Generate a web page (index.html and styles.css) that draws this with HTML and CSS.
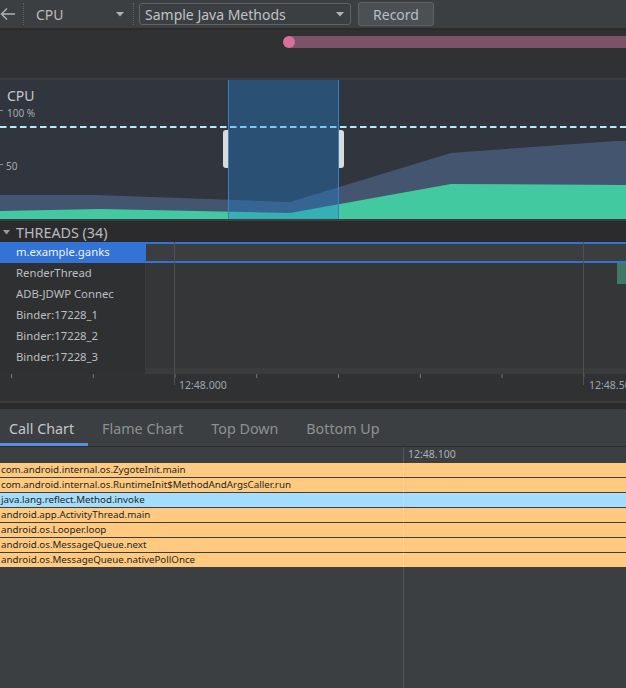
FILE: index.html
```html
<!DOCTYPE html>
<html>
<head>
<meta charset="utf-8">
<title>CPU Profiler</title>
<link rel="stylesheet" href="styles.css">
</head>
<body>
<div class="app">
  <header class="toolbar">
    <svg class="back" width="16" height="16" viewBox="0 0 16 16"><path d="M15 8H1.5M7 2.5L1.5 8L7 13.5" fill="none" stroke="#afb1b3" stroke-width="1.4"/></svg>
    <span class="sep"></span>
    <span class="cpu-select">CPU<svg class="caret" width="8" height="5" viewBox="0 0 8 5"><path d="M0 0H8L4 4.5Z" fill="#afb1b3"/></svg></span>
    <span class="sep"></span>
    <span class="combo">Sample Java Methods<svg class="caret" width="8" height="5" viewBox="0 0 8 5"><path d="M0 0H8L4 4.5Z" fill="#afb1b3"/></svg></span>
    <button class="record">Record</button>
  </header>

  <div class="timeline"><div class="range"></div></div>

  <section class="cpu">
    <svg class="cpu-chart" width="626" height="139" viewBox="0 0 626 139">
      <polygon points="0,115 95,115 290,122 451,73 616,61 626,61 626,139 0,139" fill="#44566f"/>
      <polygon points="0,131 100,129 290,133 451,104 626,105 626,139 0,139" fill="#42c9a0"/>
      <line x1="0" y1="47" x2="626" y2="47" stroke="#b5ecf7" stroke-width="2" stroke-dasharray="6.5 3.5"/>
      <line x1="0" y1="30.5" x2="3" y2="30.5" stroke="#8a8f94" stroke-width="1"/>
      <line x1="0" y1="84.5" x2="3" y2="84.5" stroke="#8a8f94" stroke-width="1"/>
    </svg>
    <div class="cpu-labels">
      <div class="cpu-title">CPU</div>
      <div class="axis-label l100">100 %</div>
      <div class="axis-label l50">50</div>
    </div>
    <div class="selection"><span class="handle left"></span><span class="handle right"></span></div>
  </section>

  <section class="threads">
    <div class="threads-head"><svg class="tri" width="7" height="5" viewBox="0 0 7 5"><path d="M0 0H7L3.5 4.5Z" fill="#9a9c9e"/></svg>THREADS (34)</div>
    <div class="timegrid">
      <div class="threads-body">
        <ul class="thread-list">
          <li class="sel">m.example.ganks</li>
          <li>RenderThread</li>
          <li>ADB-JDWP Connec</li>
          <li>Binder:17228_1</li>
          <li>Binder:17228_2</li>
          <li>Binder:17228_3</li>
        </ul>
        <div class="tracks">
          <div class="track sel"></div>
          <div class="track"><span class="state"></span></div>
          <div class="track"></div>
          <div class="track"></div>
          <div class="track"></div>
          <div class="track"></div>
          <div class="hscroll"></div>
        </div>
      </div>
      <div class="time-axis"></div>
      <span class="gridline" style="left:174px"></span>
      <span class="gridline" style="left:583px"></span>
      <span class="time-label" style="left:179px">12:48.000</span>
      <span class="time-label" style="left:589px">12:48.500</span>
    </div>
  </section>

  <div class="split"></div>

  <nav class="tabs">
    <span class="tab active">Call Chart</span>
    <span class="tab">Flame Chart</span>
    <span class="tab">Top Down</span>
    <span class="tab">Bottom Up</span>
  </nav>

  <section class="callchart">
    <div class="cc-head"><span class="cc-time">12:48.100</span></div>
    <div class="cc-rows">
      <div class="cc-row">com.android.internal.os.ZygoteInit.main</div>
      <div class="cc-row">com.android.internal.os.RuntimeInit$MethodAndArgsCaller.run</div>
      <div class="cc-row blue">java.lang.reflect.Method.invoke</div>
      <div class="cc-row">android.app.ActivityThread.main</div>
      <div class="cc-row">android.os.Looper.loop</div>
      <div class="cc-row">android.os.MessageQueue.next</div>
      <div class="cc-row">android.os.MessageQueue.nativePollOnce</div>
    </div>
    <span class="cc-marker"></span>
  </section>
</div>
</body>
</html>
```
FILE: styles.css
```css
* { box-sizing: border-box; margin: 0; padding: 0; }
html, body { width: 626px; height: 688px; overflow: hidden; background: #3c3f41; }
body { font-family: "Noto Sans", "Open Sans", sans-serif; color: #bbbbbb; }
.app { width: 626px; height: 688px; overflow: hidden; }

/* toolbar */
.toolbar {
  height: 30px; display: flex; align-items: center;
  background: #3c3f41; border-bottom: 2px solid #2b2b2b;
}
.back { display: block; }
.sep { width: 0; height: 22px; border-left: 1px dotted #5e6163; margin-left: 7px; }
.cpu-select {
  display: flex; align-items: center; justify-content: space-between;
  width: 88px; margin-left: 12px; font-size: 14px; line-height: 18px; padding-top: 1px;
}
.cpu-select .caret { margin-top: -1px; }
.cpu-select + .sep { margin-left: 9px; }
.caret { display: block; }
.combo {
  display: flex; align-items: center; justify-content: space-between;
  width: 212px; height: 22px; margin-left: 5px; padding: 1px 6px 0 5px;
  border: 1px solid #5e6366; border-radius: 3px;
  font-size: 14px; line-height: 18px; color: #c0c4c8;
}
.combo .caret { margin-top: -1px; }
.record {
  width: 76px; height: 24px; margin-left: 7px; padding-top: 1px;
  background: #4c5052; border: 1px solid #5e6366; border-radius: 3px;
  font: 14px/20px "Noto Sans", sans-serif; color: #b4bfca;
}

/* timeline */
.timeline { height: 50px; background: #2f3133; padding-top: 6px; border-bottom: 2px solid #3b3e41; }
.range { position: relative; margin-left: 289px; height: 12px; background: #7b5266; }
.range::before {
  content: ""; position: absolute; left: -6px; top: 0;
  width: 12px; height: 12px; border-radius: 50%; background: #d5719b;
}

/* cpu */
.cpu { position: relative; height: 139px; background: #31363e; }
.cpu-chart { position: absolute; left: 0; top: 0; display: block; }
.cpu-labels { position: relative; padding: 8px 0 0 7px; }
.cpu-title { font-size: 14px; line-height: 16px; color: #c4c7ca; }
.axis-label { font-size: 10px; line-height: 12px; color: #a5a9ad; }
.l100 { margin-top: 3px; }
.l50 { margin-top: 41px; margin-left: -1px; }
.selection {
  position: absolute; left: 228px; top: 0; width: 111px; height: 139px;
  background: rgba(30, 132, 220, 0.34);
  border-left: 1px solid #3a80c4; border-right: 1px solid #3a80c4;
}
.handle {
  position: absolute; top: 50px; width: 5px; height: 38px; background: #dadada;
}
.handle.left { left: -6px; border-radius: 3px 0 0 3px; }
.handle.right { right: -6px; border-radius: 0 3px 3px 0; }

/* threads */
.threads { border-top: 2px solid #3c3f41; }
.threads-head {
  height: 21px; background: #2b2b2d; display: flex; align-items: flex-start;
  padding-top: 2px; font-size: 14.3px; line-height: 19px; color: #b9bbbd;
}
.tri { margin: 7px 6px 0 3px; }
.timegrid { position: relative; }
.threads-body { display: grid; grid-template-columns: 145px 1fr; height: 132px; background: #2f3032; }
.thread-list { list-style: none; }
.thread-list li { height: 21px; padding-left: 16px; font-size: 11.3px; line-height: 20px; color: #bcbec0; white-space: nowrap; }
.thread-list li.sel { background: #3373d6; color: #eef2f8; }
.tracks { background: #353638; border-left: 1px solid #3a3b3d; }
.track { position: relative; height: 21px; }
.track.sel { background: #3c3d3f; border-top: 2px solid #3373d6; border-bottom: 2px solid #3373d6; margin-left: -1px; border-left: 1px solid #3373d6; }
.state { position: absolute; right: 0; top: 0; width: 9px; height: 21px; background: #3d7a65; }
.hscroll { height: 6px; background: #3a3b3d; }
.time-axis {
  height: 27px; background-color: #2f3133;
  background-image: linear-gradient(90deg, #767879 1px, transparent 1px);
  background-size: 81.75px 4px; background-position: 11px 0; background-repeat: repeat-x;
}
.gridline { position: absolute; top: 0; width: 1px; height: 143px; background: #4f5153; }
.time-label { position: absolute; top: 136px; font-size: 10.5px; line-height: 14px; color: #9ea8b2; white-space: nowrap; }

/* split between panes */
.split { height: 8px; background: #2b2b2d; border-top: 2px solid #3a3c3e; border-bottom: 1px solid #262729; }

/* tabs */
.tabs {
  display: flex; height: 38px; margin-left: -5px; background: #3c3f41;
  border-bottom: 1px solid #2b2b2b;
}
.tab { padding: 3px 14px 0; font-size: 14.3px; line-height: 34px; color: #8d9193; }
.tab.active { color: #c3c6c9; border-bottom: 3px solid #5b8fe0; }

/* call chart */
.callchart { position: relative; height: 241px; background: #3c3f41; }
.cc-head { height: 15px; padding-left: 408px; font-size: 10.5px; line-height: 15px; color: #aab0b6; }
.cc-rows { display: flex; flex-direction: column; gap: 1px; padding-top: 1px; }
.cc-row {
  height: 14px; padding-left: 1px; background: #ffca80;
  font-size: 9.75px; line-height: 14px; color: #262626; white-space: nowrap; overflow: hidden;
}
.cc-row.blue { background: #a4dcfc; }
.cc-marker { position: absolute; left: 403px; top: 0; bottom: 0; width: 1px; background: rgba(255, 255, 255, 0.13); }
```
